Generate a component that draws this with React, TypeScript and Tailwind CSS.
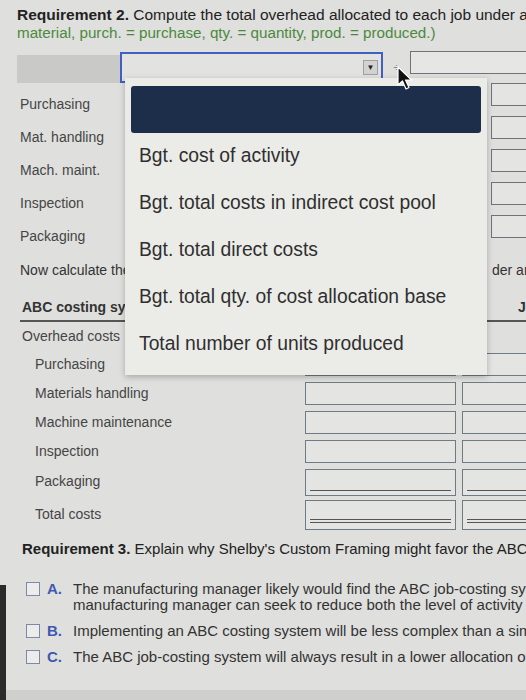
import React from 'react';

const dropdownItems = [
  'Bgt. cost of activity',
  'Bgt. total costs in indirect cost pool',
  'Bgt. total direct costs',
  'Bgt. total qty. of cost allocation base',
  'Total number of units produced',
];

const poolLabels = ['Purchasing', 'Mat. handling', 'Mach. maint.', 'Inspection', 'Packaging'];

type Row = { label: string; h: string; box: string; line?: 'single' | 'double' };

const tableRows: Row[] = [
  { label: 'Purchasing', h: 'h-[29px]', box: 'h-[23px]' },
  { label: 'Materials handling', h: 'h-[29px]', box: 'h-[23px]' },
  { label: 'Machine maintenance', h: 'h-[29px]', box: 'h-[23px]' },
  { label: 'Inspection', h: 'h-[29px]', box: 'h-[23px]' },
  { label: 'Packaging', h: 'h-[31px]', box: 'h-[27px]', line: 'single' },
  { label: 'Total costs', h: 'h-[34px]', box: 'h-[30px]', line: 'double' },
];

const options = [
  {
    key: 'A.',
    lines: [
      'The manufacturing manager likely would find the ABC job-costing system more useful',
      'manufacturing manager can seek to reduce both the level of activity (the number of',
    ],
  },
  { key: 'B.', lines: ['Implementing an ABC costing system will be less complex than a simple costing system'] },
  { key: 'C.', lines: ['The ABC job-costing system will always result in a lower allocation of overhead'] },
];

const CellBox: React.FC<{ box: string; line?: 'single' | 'double' }> = ({ box, line }) => (
  <div className={`${box} mt-[3px] border border-[#6f7b84] bg-[#e4e4e2] flex flex-col justify-end px-[4px] pb-[4px]`}>
    {line === 'single' && <div className="h-0 border-b border-[#555]" />}
    {line === 'double' && <div className="h-[4px] border-y border-[#555] mb-[2px]" />}
  </div>
);

export default function App() {
  return (
    <div className="relative w-[526px] h-[700px] overflow-hidden bg-[#dfdfdd] flex flex-col font-['Liberation_Sans',Arial,sans-serif] text-[#333]">
      {/* heading */}
      <div className="pl-[17px] pt-[6px] leading-[18px] whitespace-nowrap">
        <div className="text-[15.5px] text-[#222]">
          <span className="font-bold">Requirement 2.</span> Compute the total overhead allocated to each job under an ABC system. (Abbreviations used:
        </div>
        <div className="text-[15.2px] text-[#4b8a3c]">material, purch. = purchase, qty. = quantity, prod. = produced.)</div>
      </div>

      {/* formula row */}
      <div className="flex h-[31px] mt-[10px] shrink-0">
        <div className="w-[17px] shrink-0" />
        <div className="w-[103px] shrink-0 mt-[3px] bg-[#c9c9c7]" />
        <div className="w-[263px] shrink-0 border-2 border-[#3f5fc4] bg-[#e2e2e0] flex items-center justify-end pr-[3px]">
          <div className="w-[15px] h-[15px] bg-[#d2d2d0] border border-[#a0a0a0] flex items-center justify-center text-[8px] text-[#222] leading-none">
            ▼
          </div>
        </div>
        <div className="w-[27px] shrink-0 flex items-center justify-center text-[11px] text-[#888]">÷</div>
        <div className="w-[140px] shrink-0 h-[23px] -mt-[1px] border border-[#6d7379] bg-[#e6e6e4]" />
      </div>

      {/* cost pool rows */}
      <div className="flex flex-col">
        {poolLabels.map((l) => (
          <div key={l} className="grid grid-cols-[491px_60px] h-[33px]">
            <div className="pl-[20px] pt-[13px] text-[14px] leading-[16px] text-[#454545] whitespace-nowrap">{l}</div>
            <div className="h-[23px] border border-[#6d7379] bg-[#e4e4e2]" />
          </div>
        ))}
      </div>

      <div className="flex pl-[20px] mt-[12px] h-[20px] items-center text-[14px] text-[#333] whitespace-nowrap">
        <span className="w-[472px] shrink-0 overflow-hidden">Now calculate the total overhead allocated to each job un</span>
        <span>der an ABC system.</span>
      </div>

      {/* ABC table */}
      <div className="grid grid-cols-[279px_151px_120px] gap-x-[6px] pl-[20px] mt-[15px] text-[14px] whitespace-nowrap">
        <div className="h-[27px] flex items-center pl-[2px] font-bold text-[#333] border-b-2 border-[#555]">ABC costing system</div>
        <div className="h-[27px] flex items-center justify-center font-bold border-b-2 border-[#555]">Job 215</div>
        <div className="h-[27px] flex items-center pl-[56px] font-bold border-b-2 border-[#555]">Job 398</div>

        <div className="h-[28px] flex items-center pl-[2px] text-[#454545]">Overhead costs</div>
        <div />
        <div />

        {tableRows.map((r) => (
          <React.Fragment key={r.label}>
            <div className={`${r.h} flex items-center pl-[15px] text-[#454545]`}>{r.label}</div>
            <CellBox box={r.box} line={r.line} />
            <CellBox box={r.box} line={r.line} />
          </React.Fragment>
        ))}
      </div>

      {/* requirement 3 */}
      <div className="pl-[22px] mt-[9px] text-[15px] leading-[18px] text-[#222] whitespace-nowrap">
        <span className="font-bold">Requirement 3.</span> Explain why Shelby's Custom Framing might favor the ABC job-costing system over the simple system.
      </div>

      <div className="mt-[23px] flex flex-col gap-[10px] text-[15px] leading-[16px] whitespace-nowrap">
        {options.map((o) => (
          <div key={o.key} className="flex pl-[26px]">
            <div className="w-[14px] h-[14px] mt-[1px] shrink-0 border border-[#7c89a8] bg-[#ececea]" />
            <div className="w-[26px] shrink-0 ml-[7px] font-bold text-[#4058b0]">{o.key}</div>
            <div className="flex flex-col text-[#333]">
              {o.lines.map((t) => (
                <span key={t}>{t}</span>
              ))}
            </div>
          </div>
        ))}
      </div>

      <div className="mt-auto h-[10px] bg-[#cfcfcd]" />

      {/* photo bezel edge */}
      <div className="absolute left-0 top-[585px] w-[6px] h-[115px] bg-[#2a2a2a]" />

      {/* open dropdown */}
      <div className="absolute left-[125px] top-[78px] w-[362px] h-[297px] bg-[#ebebe8] shadow-[0_2px_6px_rgba(0,0,0,0.25)] pt-[8px]">
        <div className="mx-[6px] h-[47px] rounded-[3px] bg-[#1c2e4a]" />
        {dropdownItems.map((t) => (
          <div key={t} className="h-[47px] flex items-center pl-[14px] text-[19.3px] text-[#2f2f2f] whitespace-nowrap">
            {t}
          </div>
        ))}
      </div>

      {/* mouse pointer */}
      <svg className="absolute left-[397px] top-[66px]" width="16" height="26" viewBox="0 0 16 26">
        <path d="M1 1 L1 19 L5.5 15 L9 23 L12 21.5 L8.5 14 L14.5 14 Z" fill="#111" stroke="#fff" strokeWidth="1.2" strokeLinejoin="round" />
      </svg>
    </div>
  );
}
